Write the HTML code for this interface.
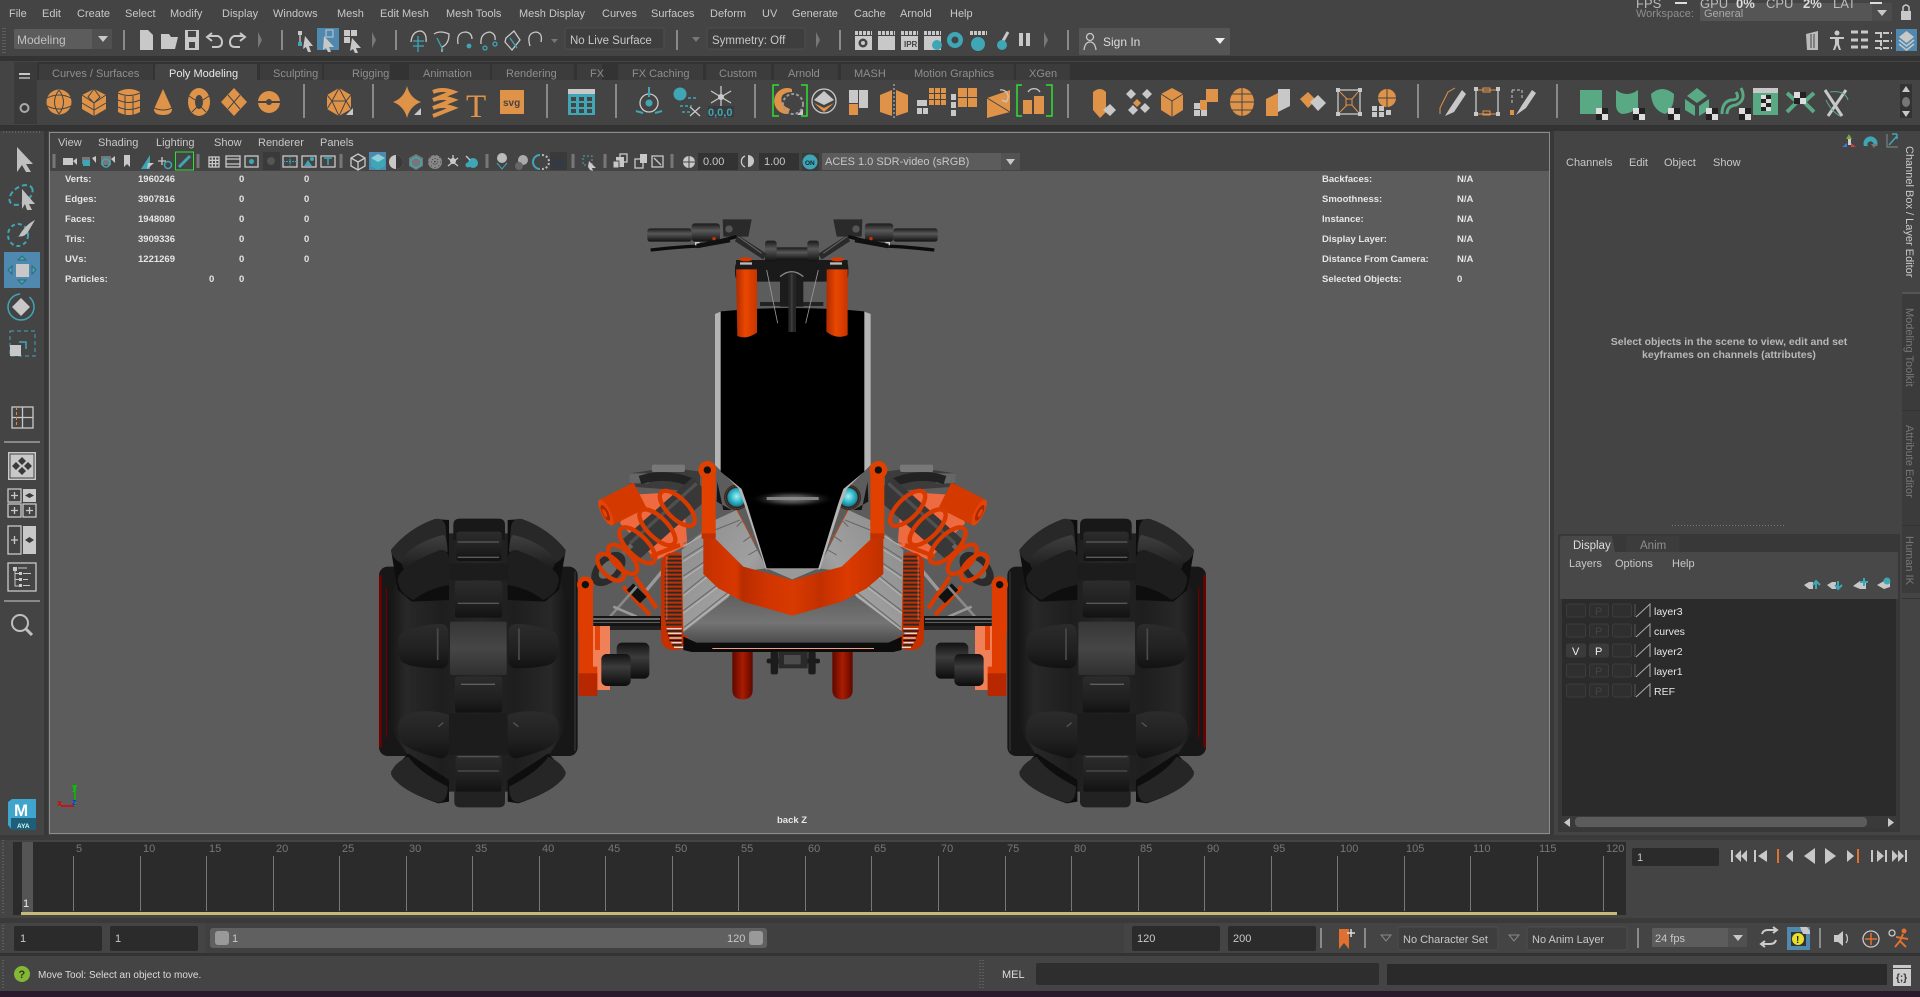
<!DOCTYPE html>
<html><head><meta charset="utf-8"><title>Maya</title>
<style>
html,body{margin:0;padding:0;background:#444;width:1920px;height:997px;overflow:hidden}
svg{display:block;position:absolute;left:0;top:0}
text{font-family:"Liberation Sans",sans-serif;font-size:11px;fill:#ccc}
.m{font-size:11px;fill:#c8c8c8}
.t{font-size:11px;fill:#8e8e8e}
.s{font-size:9.5px;font-weight:bold;fill:#e6e6e6}
.l{font-size:10.5px;fill:#e8e8e8}
.k{font-size:11px;fill:#777}
.w{fill:#c8c8c8}.o{fill:#df9348}.g{fill:#5aa985}.c{fill:#3fa6b6}
.sep{stroke:#8a8a8a;stroke-width:2;fill:none}
.ln{stroke:#444;stroke-width:1;fill:none}
.st{stroke:#c8c8c8;stroke-width:1.3;fill:none}
.cs{stroke:#3fa6b6;stroke-width:1.5;fill:none}
.fs{stroke:#c8c8c8;stroke-width:4;stroke-dasharray:3 1;fill:none}
</style></head>
<body>
<svg width="1920" height="997" viewBox="0 0 1920 997" xmlns="http://www.w3.org/2000/svg">
<defs>
<linearGradient id="fork" x1="0" x2="1" y1="0" y2="0"><stop offset="0" stop-color="#b02a00"/><stop offset=".45" stop-color="#ea4800"/><stop offset="1" stop-color="#c83400"/></linearGradient>
<linearGradient id="fork2" x1="0" x2="1" y1="0" y2="0"><stop offset="0" stop-color="#5e0800"/><stop offset=".5" stop-color="#aa1c00"/><stop offset="1" stop-color="#5e0800"/></linearGradient>
<linearGradient id="brk" x1="0" x2="1" y1="0" y2="0"><stop offset="0" stop-color="#c43000"/><stop offset=".18" stop-color="#d83800"/><stop offset=".22" stop-color="#b82c00"/><stop offset=".35" stop-color="#d03400"/><stop offset=".5" stop-color="#d83a00"/><stop offset=".65" stop-color="#c23000"/><stop offset=".8" stop-color="#dc3a00"/><stop offset="1" stop-color="#c03000"/></linearGradient>
<linearGradient id="rub" x1="0" x2="0" y1="0" y2="1"><stop offset="0" stop-color="#121212"/><stop offset=".4" stop-color="#3c3c3c"/><stop offset="1" stop-color="#0c0c0c"/></linearGradient>
<linearGradient id="bar" x1="0" x2="0" y1="0" y2="1"><stop offset="0" stop-color="#1a1a1a"/><stop offset=".4" stop-color="#585858"/><stop offset="1" stop-color="#111"/></linearGradient>
<linearGradient id="tire" x1="0" x2="1" y1="0" y2="0"><stop offset="0" stop-color="#141414"/><stop offset=".1" stop-color="#282828"/><stop offset=".3" stop-color="#1e1e1e"/><stop offset=".5" stop-color="#262626"/><stop offset=".7" stop-color="#1e1e1e"/><stop offset=".9" stop-color="#282828"/><stop offset="1" stop-color="#141414"/></linearGradient>
<linearGradient id="lug" x1="0" x2="0" y1="0" y2="1"><stop offset="0" stop-color="#2c2c2c"/><stop offset=".6" stop-color="#202020"/><stop offset="1" stop-color="#121212"/></linearGradient>
<linearGradient id="lug2" x1="0" x2="0" y1="0" y2="1"><stop offset="0" stop-color="#404040"/><stop offset="1" stop-color="#1a1a1a"/></linearGradient>
<linearGradient id="fin" x1="0" x2="1" y1="0" y2="1"><stop offset="0" stop-color="#8a8a8a"/><stop offset=".6" stop-color="#a0a0a0"/><stop offset="1" stop-color="#6e6e6e"/></linearGradient>
<linearGradient id="plate" x1="0" x2="0" y1="0" y2="1"><stop offset="0" stop-color="#5e5e5e"/><stop offset=".6" stop-color="#747474"/><stop offset="1" stop-color="#4c4c4c"/></linearGradient>
<radialGradient id="eye" cx=".5" cy=".45" r=".55"><stop offset="0" stop-color="#a8eef4"/><stop offset=".6" stop-color="#2db4c6"/><stop offset="1" stop-color="#13788a"/></radialGradient>
<radialGradient id="hl" cx=".5" cy=".5" r=".5"><stop offset="0" stop-color="#7c7c7c"/><stop offset=".5" stop-color="#3a3a3a"/><stop offset="1" stop-color="#000" stop-opacity="0"/></radialGradient>
<linearGradient id="cen" x1="0" x2="0" y1="0" y2="1"><stop offset="0" stop-color="#363636"/><stop offset=".5" stop-color="#464646"/><stop offset="1" stop-color="#303030"/></linearGradient>
<g id="wheel">
<rect x="22" y="200" width="596" height="568" rx="26" fill="#171717"/>
<rect x="610" y="226" width="8" height="516" fill="#6e0000"/>
<rect x="594" y="262" width="4" height="450" fill="#6a0000"/>
<rect x="28" y="215" width="4" height="538" fill="#333"/>
<path d="M50 300Q100 180 230 100L410 100Q540 180 590 300L590 660Q540 790 410 875L230 875Q100 790 50 660Z" fill="url(#tire)"/>
<rect x="235" y="365" width="170" height="160" rx="6" fill="url(#cen)"/>
<rect x="232" y="190" width="176" height="50" fill="#1c1c1c"/>
<rect x="232" y="640" width="176" height="125" fill="#1c1c1c"/>
<path d="M240 75Q240 56 260 56L375 56Q395 56 395 75L395 120L240 120Z" fill="#181818"/>
<rect x="250" y="95" width="136" height="88" rx="8" fill="url(#lug)"/>
<path d="M258 126H382M258 172H382" stroke="#5c5c5c" stroke-width="4"/>
<rect x="248" y="243" width="142" height="110" rx="8" fill="url(#lug)"/>
<path d="M258 310H382" stroke="#565656" stroke-width="4"/>
<rect x="248" y="530" width="142" height="108" rx="8" fill="url(#lug)"/>
<path d="M270 553H372" stroke="#606060" stroke-width="4"/>
<path d="M240 860H392V905Q392 922 375 922H258Q240 922 240 905Z" fill="#222"/>
<rect x="250" y="765" width="138" height="110" rx="6" fill="url(#lug)"/>
<path d="M258 770H382M258 813H382" stroke="#505050" stroke-width="4"/>
<g id="wl">
<path d="M58 150Q110 85 190 57L232 60L232 300L120 305L78 270Z" fill="#0e0e0e"/>
<path d="M58 815L110 760L232 840L232 905L200 910Q110 880 75 845Z" fill="#0e0e0e"/>
<path d="M58 150Q110 85 190 57Q216 52 222 80L225 118L90 190Q60 175 58 150Z" fill="#282828"/>
<path d="M85 180Q130 125 215 105Q226 110 228 155L100 215Z" fill="url(#lug2)"/>
<path d="M78 235Q90 195 205 150Q228 148 232 175L232 255Q170 265 125 300Q80 280 78 235Z" fill="#1e1e1e"/>
<path d="M78 438Q78 395 110 388Q180 370 210 372Q230 375 230 400V480Q230 505 205 505Q120 503 100 490Q78 480 78 438Z" fill="url(#lug)"/>
<path d="M198 385V480" stroke="#4a4a4a" stroke-width="5"/>
<path d="M78 685Q78 650 110 640Q180 625 232 645V750Q228 775 205 775Q140 760 105 740Q78 720 78 685Z" fill="url(#lug)"/>
<path d="M200 680L215 668" stroke="#555" stroke-width="4"/>
<path d="M58 820Q65 790 110 770Q140 815 228 860Q228 905 200 908Q110 880 75 845Q58 830 58 820Z" fill="#262626"/>
</g>
<use href="#wl" transform="translate(640,0) scale(-1,1)"/>
</g>
<g id="half">
<!-- lower fork -->
<path d="M397 690H458V810Q458 838 428 838Q397 838 397 810Z" fill="url(#fork2)"/>
<!-- pipes -->
<path d="M155 135L230 145L300 155L300 215L90 200L90 160L155 150Z" fill="#3c3c3c"/>
<rect x="88" y="160" width="60" height="30" rx="6" fill="#666"/>
<rect x="155" y="134" width="100" height="22" rx="6" fill="#787878"/>
<path d="M120 180Q200 155 280 190" stroke="#222" stroke-width="26" fill="none"/>
<path d="M90 225L250 215L262 375L170 420L60 310Z" fill="#ee6a40"/>
<!-- reservoir -->
<g transform="rotate(-27 60 255)"><rect x="12" y="213" width="115" height="86" rx="6" fill="#d43a00"/><ellipse cx="12" cy="256" rx="14" ry="43" fill="#e2440a"/><ellipse cx="10" cy="256" rx="9" ry="26" fill="#a82800"/><ellipse cx="8" cy="256" rx="5" ry="14" fill="#e2440a"/></g>
<!-- shock 1 -->
<path d="M305 200L85 395" stroke="#383838" stroke-width="78"/>
<path d="M290 190L90 370" stroke="#505050" stroke-width="10"/>
<path d="M95 375L20 450" stroke="#666" stroke-width="14"/>
<path d="M30 440L-20 490" stroke="#999" stroke-width="10"/>
<ellipse cx="25" cy="447" rx="62" ry="38" transform="rotate(-45 25 447)" fill="#2b2b2b"/>
<ellipse cx="25" cy="447" rx="36" ry="20" transform="rotate(-45 25 447)" fill="#6a6a6a"/>
<g fill="none" stroke="#d83a00" stroke-width="13">
<ellipse cx="232" cy="265" rx="68" ry="30" transform="rotate(45 232 265)"/>
<ellipse cx="172" cy="322" rx="70" ry="30" transform="rotate(45 172 322)"/>
<ellipse cx="112" cy="376" rx="70" ry="30" transform="rotate(45 112 376)"/>
<ellipse cx="68" cy="418" rx="56" ry="26" transform="rotate(45 68 418)"/>
<ellipse cx="32" cy="442" rx="50" ry="26" transform="rotate(45 32 442)"/>
<path d="M105 470L170 565M70 500L150 585M150 410L240 375"/>
</g>
<path d="M90 500L130 540" stroke="#111" stroke-width="28"/>
<path d="M30 590L110 500" stroke="#888" stroke-width="8"/>
<path d="M140 510L190 450" stroke="#999" stroke-width="10"/>
<path d="M40 560L110 590" stroke="#999" stroke-width="8"/>
<!-- A arm -->
<rect x="-20" y="588" width="205" height="30" fill="#151515"/>
<path d="M-20 597H180" stroke="#bbb" stroke-width="3"/>
<path d="M-20 607H180" stroke="#666" stroke-width="3"/>
<rect x="-20" y="618" width="210" height="12" fill="#222"/>
<!-- brake disc -->
<rect x="183" y="398" width="80" height="292" rx="34" fill="#c43000"/>
<path d="M205 410H245M200 422H245M198 434H245M196 446H245M195 458H245M194 470H245M194 482H245M194 494H245M194 506H245M194 518H245M194 530H245M194 542H245M194 554H245M194 566H245M194 578H245M194 590H245M196 602H245M198 614H245" stroke="#2a2a2a" stroke-width="6"/>
<path d="M200 410V600" stroke="#f0805a" stroke-width="5" opacity=".4"/>
<path d="M200 626H245M204 640H245M208 654H245M214 668H245M222 682H250" stroke="#ddd" stroke-width="4"/>
<path d="M200 633H245M204 647H245M208 661H245M216 675H245" stroke="#111" stroke-width="4"/>
<!-- fins -->
<path d="M245 390L345 300L410 270L500 445L420 455L400 510L290 668L250 640Z" fill="url(#fin)"/>
<g stroke="#666" stroke-width="3"><path d="M250 372L345 315M250 415L345 355M250 468L350 400M250 520L350 440M250 572L385 470M252 622L400 505M285 655L420 540M345 330L420 300M410 320L430 300M430 365L465 340M445 405L480 385"/></g>
<g stroke="#b6b6b6" stroke-width="3"><path d="M250 380L345 322M250 424L345 364M250 476L350 408M250 528L350 448M250 580L385 478M252 630L400 513"/></g>
<!-- light -->
<path d="M352 185L370 270L395 270L350 245Z" fill="#151515"/>
<circle cx="410" cy="232" r="38" fill="#2a2a2a"/>
<circle cx="410" cy="232" r="34" fill="none" stroke="#d83a00" stroke-width="2" stroke-dasharray="3 4"/>
<circle cx="410" cy="232" r="28" fill="url(#eye)"/>
<path d="M410 270L465 370" stroke="#e04000" stroke-width="2"/>
<!-- left post assembly -->
<rect x="-22" y="618" width="52" height="192" fill="#f08058"/>
<rect x="50" y="668" width="98" height="108" rx="16" fill="url(#rub)"/>
<rect x="4" y="702" width="88" height="96" rx="16" fill="url(#rub)"/>
<path d="M-66 490H-21V740H-8V810H-64V660L-66 620Z" fill="#de3c00"/>
<rect x="-64" y="760" width="56" height="68" fill="#b82800"/>
<circle cx="-44" cy="494" r="25" fill="#de3c00"/>
<circle cx="-44" cy="494" r="11" fill="#111"/>
<path d="M-15 618H0V690H-15Z" fill="#e2440a"/>
</g>
</defs>

<!-- base -->
<rect width="1920" height="997" fill="#444"/>
<rect x="0" y="56" width="1920" height="5" fill="#333"/>
<rect x="0" y="125" width="1920" height="6" fill="#333"/>
<rect x="44" y="131" width="4" height="705" fill="#383838"/>
<rect x="0" y="835" width="1920" height="5" fill="#3a3a3a"/>
<rect x="0" y="918" width="1920" height="5" fill="#3a3a3a"/>
<rect x="0" y="953" width="1920" height="3" fill="#333"/>
<rect x="0" y="991" width="1920" height="6" fill="#2a1a2c"/>

<!-- menu -->
<text class="m" y="17">
<tspan x="9">File</tspan><tspan x="42">Edit</tspan><tspan x="77">Create</tspan><tspan x="125">Select</tspan><tspan x="170">Modify</tspan><tspan x="222">Display</tspan><tspan x="273">Windows</tspan><tspan x="337">Mesh</tspan><tspan x="380">Edit Mesh</tspan><tspan x="446">Mesh Tools</tspan><tspan x="519">Mesh Display</tspan><tspan x="602">Curves</tspan><tspan x="651">Surfaces</tspan><tspan x="710">Deform</tspan><tspan x="762">UV</tspan><tspan x="792">Generate</tspan><tspan x="854">Cache</tspan><tspan x="900">Arnold</tspan><tspan x="950">Help</tspan>
</text>
<rect x="1700" y="3" width="192" height="18" fill="#555"/>
<rect x="1872" y="3" width="20" height="18" fill="#4c4c4c"/>
<path d="M1877 10H1887L1882 16Z" class="w"/>
<text x="1636" y="8" style="font-size:13px;fill:#bbb">FPS</text>
<rect x="1675" y="2" width="12" height="2" fill="#ddd"/>
<g><text x="1700" y="8" style="font-size:13px;fill:#bbb">GPU</text><text x="1736" y="8" style="font-size:13px;font-weight:bold;fill:#ddd">0%</text><text x="1766" y="8" style="font-size:13px;fill:#bbb">CPU</text><text x="1803" y="8" style="font-size:13px;font-weight:bold;fill:#ddd">2%</text><text x="1833" y="8" style="font-size:13px;fill:#bbb">LAT</text></g>
<rect x="1870" y="2" width="12" height="2" fill="#ddd"/>
<text class="t" x="1636" y="17">Workspace:</text><text class="t" x="1704" y="17" style="fill:#aaa">General</text>
<rect x="1901" y="11" width="10" height="9" class="w"/><path d="M1903 11V7Q1906 3 1909 7V11" stroke="#c8c8c8" stroke-width="1.5" fill="none"/>

<!-- status line -->
<path d="M3 28V54M5 28V54" stroke="#777" stroke-dasharray="1 2"/>
<rect x="14" y="29" width="98" height="20" rx="2" fill="#5c5c5c"/>
<rect x="92" y="29" width="20" height="20" fill="#505050"/>
<path d="M98 36H108L103 42Z" class="w"/>
<text class="t" x="17" y="44" style="font-size:12px;fill:#c0c0c0">Modeling</text>
<path class="sep" d="M124 30V50M282 30V50M396 30V50M677 30V50M840 30V50M1068 30V50"/>
<path d="M140 30H148L153 35V50H140Z" class="w"/>
<path d="M161 34H169L171 37H178L175 49H161Z" class="w"/>
<path d="M185 30H199V50H185Z" class="w"/><rect x="188" y="31" width="8" height="6" fill="#444"/><rect x="189" y="42" width="6" height="6" fill="#444"/>
<path d="M208 36H218Q222 38 222 42Q222 47 217 47H212M212 33L207 37L212 41" stroke="#c8c8c8" stroke-width="2" fill="none"/>
<path d="M244 36H234Q230 38 230 42Q230 47 235 47H240M240 33L245 37L240 41" stroke="#c8c8c8" stroke-width="2" fill="none"/>
<path d="M258 32L262 40L258 48Z" fill="#777"/>
<path d="M372 32L376 40L372 48Z" fill="#777"/><path d="M816 32L820 40L816 48Z" fill="#777"/><path d="M1044 32L1048 40L1044 48Z" fill="#777"/>
<g><rect x="298" y="31" width="4" height="4" class="w"/><rect x="298" y="42" width="4" height="4" class="c"/><path d="M300 35V42" class="st"/><path d="M305 36L313 46L309 46L311 52L308 52L306 47L303 49Z" class="w"/></g>
<rect x="317" y="28" width="22" height="22" fill="#5089b0"/><rect x="326" y="30" width="7" height="7" style="fill:none;stroke:#c8c8c8"/><path d="M324 36L334 47L329 47L331 52L328 52L326 48L323 50Z" class="w"/>
<rect x="344" y="30" width="6" height="6" class="w"/><rect x="351" y="30" width="6" height="6" class="w"/><rect x="344" y="37" width="6" height="6" class="w"/><path d="M352 38L361 48L356 48L358 53L355 53L353 49L350 51Z" class="w"/>
<g class="st"><path d="M411 42Q412 31 421 31Q427 33 426 42" style="stroke:#c8c8c8"/><path d="M418 36V52M413 41H424M413 46H424" style="stroke:#3fa6b6"/>
<path d="M434 34Q440 30 449 34Q449 44 442 47L442 52" /><path d="M437 38L443 50" style="stroke:#3fa6b6"/>
<path d="M458 44Q456 32 466 32Q472 33 472 39"/><circle cx="469" cy="46" r="2.4" fill="#3fa6b6" stroke="none"/>
<path d="M481 44Q480 33 490 32Q496 34 495 40"/><circle cx="485" cy="48" r="2" fill="none" style="stroke:#3fa6b6"/><circle cx="495" cy="44" r="2" fill="none" style="stroke:#3fa6b6"/>
<path d="M506 38L514 31L520 40L512 50L505 42Z"/><path d="M510 38L517 48" style="stroke:#3fa6b6"/>
<path d="M530 46Q526 33 536 32Q543 33 541 42"/></g>
<path d="M551 39H558L554.500 43Z" fill="#777"/>
<rect x="565" y="28" width="99" height="21" rx="2" fill="#3e3e3e" stroke="#4e4e4e"/><text x="570" y="44" class="m" style="font-size:11.500px">No Live Surface</text>
<path d="M692 37H700L696 42Z" fill="#777"/>
<rect x="707" y="28" width="98" height="21" rx="2" fill="#3e3e3e" stroke="#4e4e4e"/><text x="712" y="44" class="m" style="font-size:11.500px">Symmetry: Off</text>
<path class="fs" d="M855 33H872M878 33H895M901 33H918M924 33H941M970 33H987"/>
<rect x="855" y="36" width="17" height="14" class="w"/><circle cx="863" cy="43" r="4.500" fill="#444"/><circle cx="863" cy="43" r="2" class="w"/>
<rect x="878" y="36" width="17" height="14" class="w"/>
<rect x="901" y="36" width="17" height="14" class="w"/><text x="904" y="47" style="font-size:8px;font-weight:bold;fill:#444">IPR</text>
<rect x="924" y="36" width="17" height="14" class="w"/><circle cx="937" cy="45" r="5" class="c"/>
<circle cx="955" cy="40" r="8" class="c"/><circle cx="955" cy="40" r="3.500" fill="#444"/>
<circle cx="978" cy="44" r="7" class="c"/>
<path d="M999 48L1008 32" stroke="#c8c8c8" stroke-width="3"/><circle cx="1002" cy="45" r="5" class="c"/>
<rect x="1019" y="33" width="4" height="13" class="w"/><rect x="1026" y="33" width="4" height="13" class="w"/>
<rect x="1079" y="28" width="151" height="27" rx="1" fill="#555"/>
<circle cx="1090" cy="37" r="3.500" class="st"/><path d="M1084 50Q1085 42 1090 42Q1095 42 1096 50" class="st"/>
<text x="1103" y="46" style="font-size:12px;fill:#ddd">Sign In</text>
<path d="M1215 38H1225L1220 44Z" fill="#eee"/>
<g><path d="M1806 34L1818 31V50H1807Z" fill="#bbb"/><path d="M1811 34V48M1814 34V48" stroke="#444"/></g>
<circle cx="1837" cy="33" r="2.500" class="w"/><path d="M1830 37H1844V39H1839V44L1841 50H1839L1837 45L1835 50H1833L1835 44V39H1830Z" class="w"/>
<path d="M1851 32H1869M1851 40H1869M1851 47H1869" stroke="#c8c8c8" stroke-width="3" stroke-dasharray="7 3"/>
<path d="M1875 33H1892M1875 41H1892M1875 48H1892M1881 32V50" stroke="#c8c8c8" stroke-width="2" stroke-dasharray="6 2"/>
<rect x="1896" y="29" width="21" height="22" fill="#5089b0"/><path d="M1906.500 31L1914 37L1906.500 43L1899 37Z" class="w"/><path d="M1899 40L1906.500 46L1914 40M1899 44L1906.500 50L1914 44" stroke="#c8c8c8" stroke-width="1.500" fill="none"/>

<!-- shelf -->
<rect x="14" y="62" width="23" height="62" fill="#3a3a3a"/>
<rect x="37" y="62" width="1883" height="18" fill="#333"/>
<rect x="19" y="73" width="11" height="2" class="w"/><rect x="19" y="77" width="11" height="2" fill="#999"/>
<circle cx="24.500" cy="108" r="4" stroke="#aaa" stroke-width="2" fill="none"/>
<g fill="#3c3c3c">
<path d="M39 80V66Q39 64 41 64H153V80Z"/><path d="M260 80V64H322V80Z"/><path d="M324 80V64H390V80Z"/><path d="M409 80V64H490V80Z"/><path d="M492 80V64H574V80Z"/><path d="M577 80V64H602V80Z"/><path d="M618 80V64H703V80Z"/><path d="M706 80V64H771V80Z"/><path d="M774 80V64H838V80Z"/><path d="M841 80V64H900V80Z"/><path d="M900 80V64H1014V80Z"/><path d="M1016 80V64H1070V80Z"/>
</g>
<path d="M155 80V66Q155 64 157 64H257V80Z" fill="#444"/>
<g class="t"><text x="52" y="77" class="t">Curves / Surfaces</text><text x="169" y="77" style="fill:#e8e8e8">Poly Modeling</text><text x="273" y="77" class="t">Sculpting</text><text x="352" y="77" class="t">Rigging</text><text x="423" y="77" class="t">Animation</text><text x="506" y="77" class="t">Rendering</text><text x="590" y="77" class="t">FX</text><text x="632" y="77" class="t">FX Caching</text><text x="719" y="77" class="t">Custom</text><text x="788" y="77" class="t">Arnold</text><text x="854" y="77" class="t">MASH</text><text x="914" y="77" class="t">Motion Graphics</text><text x="1029" y="77" class="t">XGen</text></g>
<path class="sep" d="M304 84V118M373 84V118M547 84V118M616 84V118M755 84V118M1068 84V118M1418 84V118M1557 84V118"/>
<!-- poly primitives -->
<circle cx="59" cy="102" r="12.500" class="o"/><path class="ln" d="M47 98Q59 92 71 98M47 106Q59 112 71 106M59 90Q50 102 59 114M59 90Q68 102 59 114"/>
<path class="o" d="M94 89L106 95V109L94 116L82 109V95Z"/><path class="ln" d="M94 89L88 97L94 103L100 97ZM94 103V116M82 95L94 103M106 95L94 103M82 103L94 110L106 103"/>
<path class="o" d="M118 92Q129 86 140 92V112Q129 118 118 112Z"/><path class="ln" d="M118 93Q129 98 140 93M118 100Q129 105 140 100M118 107Q129 112 140 107M125 96V115M133 96V115"/>
<path class="o" d="M163 89L172 109Q172 115 163 115Q154 115 154 109Z"/><path class="ln" d="M154 108Q163 112 172 108"/>
<ellipse cx="199" cy="102" rx="11" ry="14" class="o"/><ellipse cx="199" cy="102" rx="4" ry="7" fill="#444"/><path class="ln" d="M189 96L195 100M209 96L203 100M192 112L197 107M206 112L201 107"/>
<path class="o" d="M234 88L247 102L234 116L221 102Z"/><path class="ln" d="M228 95L240 109M240 95L228 109"/>
<circle cx="269" cy="102" r="11" class="o"/><path d="M258 102H280" stroke="#444" stroke-width="2"/><circle cx="269" cy="102" r="3" fill="#444"/>
<path class="o" d="M339 88L351 95V109L339 116L327 109V95Z"/><path class="ln" d="M339 88L332 101L346 101ZM327 95L332 101L339 116L346 101L351 95M332 101L327 109M346 101L351 109"/><path d="M353 115V108L346 115Z" class="w"/>
<path class="o" d="M407 86Q410 98 421 102Q410 106 407 118Q404 106 393 102Q404 98 407 86Z"/><path d="M421 115V108L414 115Z" class="w"/>
<path d="M433 92Q442 88 453 92L433 100Q442 96 453 100L433 108Q442 104 453 108L433 116" stroke="#df9348" stroke-width="4" fill="none"/>
<text x="466" y="117" style="font-family:'Liberation Serif',serif;font-size:33px;fill:#df9348">T</text>
<rect x="500" y="90" width="24" height="24" class="o"/><text x="503" y="106" style="font-size:10px;font-weight:bold;fill:#444">svg</text>
<!-- calc -->
<rect x="568" y="89" width="27" height="5" class="w"/><rect x="568" y="94" width="27" height="21" class="c"/>
<g fill="#444"><rect x="571" y="97" width="5" height="4"/><rect x="579" y="97" width="5" height="4"/><rect x="587" y="97" width="5" height="4"/><rect x="571" y="103" width="5" height="4"/><rect x="579" y="103" width="5" height="4"/><rect x="587" y="103" width="5" height="4"/><rect x="571" y="109" width="5" height="4"/><rect x="579" y="109" width="5" height="4"/><rect x="587" y="109" width="5" height="4"/></g>
<!-- constraints -->
<circle cx="649" cy="103" r="9" class="st"/><path d="M649 87V97M643 113L636 111M655 113L662 111" stroke="#3fa6b6" stroke-width="2"/><circle cx="649" cy="103" r="3.500" class="c"/>
<circle cx="680" cy="94" r="6.500" class="c"/><path d="M688 98H698M680 106H692M682 112H692" class="cs" stroke-dasharray="3 2"/><path d="M690 107L700 116M700 107L690 116" class="st"/>
<path d="M721 86V106M711 91L731 103M731 91L711 103" class="st" stroke-width="2"/><circle cx="721" cy="97" r="3" class="w"/>
<rect x="708" y="106" width="26" height="11" fill="#3a3a3a"/><text x="708" y="116" style="font-size:11px;fill:#3fa6b6;font-weight:bold">0,0,0</text>
<!-- deform row -->
<path d="M779 85H773V116H779M801 85H807V116H801" stroke="#2ee02e" stroke-width="1.500" fill="none"/>
<path d="M792 89A13 13 0 1 0 788 114L790 109Q779 105 782 96Q785 92 792 92Z" class="o"/><circle cx="793" cy="104" r="10" fill="none" stroke="#999" stroke-width="2" stroke-dasharray="3 2"/><path d="M803 115V109L797 115Z" class="w"/>
<circle cx="824" cy="101" r="12" class="st"/><path class="w" d="M824 91L834 100L824 105L814 100Z"/><path class="o" d="M814 103L824 108L834 103L824 112Z"/>
<rect x="849" y="90" width="9" height="13" class="w"/><rect x="859" y="90" width="9" height="18" class="w"/><rect x="849" y="104" width="9" height="11" class="o"/>
<path class="o" d="M880 95L892 90V116L880 112Z"/><path class="o" d="M896 90L908 95V112L896 116Z"/><path d="M894 84V118" stroke="#c8c8c8" stroke-dasharray="2 2"/>
<g class="o"><rect x="929" y="88" width="5" height="5"/><rect x="935" y="88" width="5" height="5"/><rect x="941" y="88" width="5" height="5"/><rect x="929" y="94" width="5" height="5"/><rect x="935" y="94" width="5" height="5"/><rect x="941" y="94" width="5" height="5"/><rect x="929" y="100" width="5" height="5"/><rect x="935" y="100" width="5" height="5"/><rect x="941" y="100" width="5" height="5"/></g><g class="w"><rect x="917" y="100" width="10" height="6"/><rect x="917" y="108" width="5" height="6"/><rect x="923" y="108" width="5" height="6"/></g>
<g class="w"><rect x="951" y="94" width="5" height="6"/><rect x="951" y="102" width="5" height="6"/><rect x="951" y="110" width="5" height="6"/></g><g class="o"><rect x="958" y="88" width="9" height="9"/><rect x="968" y="88" width="9" height="9"/><rect x="958" y="98" width="9" height="9"/><rect x="968" y="98" width="9" height="9"/></g>
<path class="o" d="M987 98L1010 90V112L987 118Z"/><path class="ln" d="M987 98L1010 112"/><path d="M1000 90A7 7 0 0 1 1006 102M1006 102L1002 100" class="st"/>
<path d="M1022 85H1017V116H1022M1046 85H1052V116H1046" stroke="#2ee02e" stroke-width="1.500" fill="none"/><path class="o" d="M1023 100H1032V114H1023ZM1034 96H1044V114H1034Z"/><path d="M1028 92A7 7 0 0 1 1040 92" class="st"/>
<!-- edit mesh icons -->
<path class="o" d="M1093 92Q1100 86 1106 92V112L1100 118L1093 110Z"/><path class="w" d="M1103 110L1110 104L1116 110L1110 116Z"/>
<g class="w"><path d="M1126 94L1131 89L1136 94L1131 99Z"/><path d="M1140 108L1145 103L1150 108L1145 113Z"/><path d="M1128 110L1133 105L1138 110L1133 115Z"/><path d="M1142 94L1147 89L1152 94L1147 99Z"/></g><g class="o"><path d="M1133 103L1137 99L1141 103L1137 107Z"/></g>
<path class="o" d="M1172 88L1183 94V110L1172 117L1161 110V94Z"/><path class="ln" d="M1172 101L1161 94M1172 101L1183 94M1172 101V117"/>
<path class="o" d="M1206 89H1218V102H1206Z"/><path class="o" d="M1200 100H1207V110H1200Z"/><g class="w"><rect x="1194" y="103" width="6" height="6"/><rect x="1194" y="110" width="6" height="6"/><rect x="1201" y="110" width="6" height="6"/></g>
<ellipse cx="1242" cy="102" rx="12" ry="14" class="o"/><path class="ln" d="M1230 102H1254M1242 88V116M1232 94H1252M1232 110H1252"/>
<path class="o" d="M1266 99L1278 93V116H1266Z"/><path class="w" d="M1278 89L1290 89V106L1278 112Z"/>
<path class="o" d="M1300 99L1308 92L1316 100L1308 108Z"/><path class="w" d="M1310 102L1318 95L1326 103L1318 111Z"/>
<rect x="1338" y="90" width="22" height="24" class="st"/><g class="w"><rect x="1336" y="88" width="4" height="4"/><rect x="1358" y="88" width="4" height="4"/><rect x="1336" y="112" width="4" height="4"/><rect x="1358" y="112" width="4" height="4"/></g><rect x="1346" y="99" width="6" height="6" stroke="#df9348" fill="none"/><path d="M1340 92L1347 99M1358 92L1352 99M1340 112L1347 105M1358 112L1352 105" stroke="#df9348"/>
<circle cx="1387" cy="98" r="9" class="o"/><path class="ln" d="M1378 98H1396M1387 89V107"/><g class="w"><rect x="1372" y="106" width="5" height="5"/><rect x="1379" y="106" width="5" height="5"/><rect x="1372" y="112" width="5" height="5"/><rect x="1379" y="112" width="5" height="5"/><rect x="1386" y="110" width="5" height="5"/></g>
<!-- curves tools -->
<path d="M1440 114V108L1448 92L1455 88" stroke="#df9348" fill="none"/><path d="M1445 116L1450 108L1462 90L1466 94L1454 112Z" class="w"/>
<path d="M1476 90V114M1498 90V114" class="st"/><path d="M1478 90H1496M1478 114H1496" stroke="#df9348"/><g class="w"><rect x="1474" y="87" width="4" height="4"/><rect x="1496" y="87" width="4" height="4"/><rect x="1474" y="112" width="4" height="4"/><rect x="1496" y="112" width="4" height="4"/></g><rect x="1483" y="88" width="7" height="4" fill="none" stroke="#df9348"/><rect x="1483" y="111" width="7" height="4" fill="none" stroke="#df9348"/>
<path d="M1512 90H1522M1512 90V104M1522 90V100" stroke="#c8c8c8" stroke-dasharray="3 2"/><path d="M1516 115L1522 105L1532 90L1536 93L1526 108Z" class="w"/><rect x="1510" y="110" width="4" height="5" class="o"/>
<!-- green -->
<rect x="1580" y="90" width="22" height="24" class="g"/><g id="ck"><rect x="1596" y="108" width="6" height="6" fill="#ddd"/><rect x="1602" y="114" width="6" height="6" fill="#ddd"/><rect x="1602" y="108" width="6" height="6" fill="#222"/><rect x="1596" y="114" width="6" height="6" fill="#222"/></g>
<path class="g" d="M1616 90Q1627 98 1638 90V108Q1630 114 1622 114Q1616 112 1616 105Z"/><use href="#ck" transform="translate(37,0)"/>
<path class="g" d="M1651 94Q1662 84 1674 94Q1674 110 1665 114Q1652 110 1651 94Z"/><use href="#ck" transform="translate(72,0)"/>
<path class="g" d="M1697 88L1707 96L1697 103L1687 96Z"/><path class="g" d="M1685 99L1695 106V116L1685 110ZM1709 99L1699 106V116L1709 110Z"/><use href="#ck" transform="translate(110,0)"/>
<path d="M1722 114Q1722 102 1731 100Q1741 100 1736 92M1727 114Q1727 106 1736 105Q1747 100 1741 88" stroke="#5aa985" stroke-width="3" fill="none"/><use href="#ck" transform="translate(143,0)"/>
<rect x="1753" y="88" width="25" height="27" class="g"/><rect x="1753" y="88" width="25" height="5" class="w"/><g fill="#ddd"><rect x="1761" y="95" width="5" height="4"/><rect x="1766" y="99" width="5" height="4"/><rect x="1761" y="103" width="5" height="4"/><rect x="1766" y="107" width="5" height="4"/></g><g fill="#222"><rect x="1766" y="95" width="5" height="4"/><rect x="1761" y="99" width="5" height="4"/><rect x="1766" y="103" width="5" height="4"/><rect x="1761" y="107" width="5" height="4"/></g>
<path d="M1787 93L1797 102L1787 112M1814 93L1804 102L1814 112" stroke="#5aa985" stroke-width="4" fill="none"/><use href="#ck" transform="translate(198,-16)"/>
<path d="M1825 90L1842 116M1846 90L1828 116" stroke="#c8c8c8" stroke-width="3"/><path d="M1830 92Q1845 90 1848 100M1826 100Q1832 112 1840 116" stroke="#5aa985" fill="none"/>
<rect x="1900" y="84" width="12" height="34" fill="#333"/><path d="M1902 92L1906 86L1910 92Z" class="w"/><ellipse cx="1906" cy="102" rx="4" ry="5" fill="#777"/><path d="M1902 111L1906 117L1910 111Z" class="w"/>

<!-- left toolbox -->
<path d="M3 132H40" stroke="#777" stroke-dasharray="1 2"/>
<path d="M17 147L33 164L26 164L31 172L26 172L22 165L17 172Z" fill="#c0c0c0"/>
<ellipse cx="21" cy="195" rx="13" ry="8" transform="rotate(-35 21 195)" fill="none" stroke="#3fa6b6" stroke-width="2" stroke-dasharray="5 3"/><path d="M22 189L35 204L29 204L32 210L27 210L25 204L22 209Z" fill="#c0c0c0"/>
<ellipse cx="18" cy="235" rx="10" ry="11" fill="none" stroke="#3fa6b6" stroke-width="2" stroke-dasharray="4 3"/><path d="M19 236Q25 225 35 220L28 232Q24 238 17 236Z" fill="#c0c0c0"/>
<rect x="4" y="252" width="36" height="36" fill="#5089b0"/><rect x="16" y="264" width="13" height="13" class="w"/><path d="M22 256L26 260H18ZM22 284L26 280H18ZM8 270L12 266V274ZM36 270L32 266V274Z" fill="#4aa8b8" stroke="#2c6a78"/>
<circle cx="21" cy="307" r="13" class="cs" stroke-width="1.500" stroke-dasharray="60 10"/><path d="M21 298L30 307L21 316L12 307Z" class="w"/>
<rect x="10" y="331" width="25" height="25" fill="none" stroke="#3fa6b6" stroke-dasharray="4 3"/><rect x="10" y="345" width="11" height="11" class="w"/><path d="M19 342H26V349" class="cs"/>
<rect x="12" y="407" width="21" height="21" class="st" stroke-width="1.500"/><path d="M22.500 407V428M12 417.500H33" class="st"/><path d="M16.500 407V428" stroke="#e08a3a" stroke-dasharray="3 2"/>
<rect x="4" y="441" width="36" height="2" fill="#888"/>
<rect x="8" y="452" width="28" height="28" class="w"/><rect x="10" y="454" width="24" height="24" fill="none" stroke="#444"/><g fill="#3a3a3a"><path d="M22 457L26 461L22 465L18 461Z"/><path d="M22 467L26 471L22 475L18 471Z"/><path d="M16 462L20 466L16 470L12 466Z"/><path d="M28 462L32 466L28 470L24 466Z"/></g>
<rect x="8" y="489" width="13" height="13" class="st"/><rect x="23" y="489" width="13" height="13" class="w"/><rect x="8" y="504" width="13" height="13" class="st"/><rect x="23" y="504" width="13" height="13" class="st"/>
<path d="M11 495.500H18M14.500 492V499M11 510.500H18M14.500 507V514M26 510.500H33M29.500 507V514" class="st"/><path d="M29.500 493L34 495.500L29.500 498L25 495.500Z" fill="#3a3a3a"/>
<rect x="8" y="526" width="13" height="28" class="st"/><rect x="23" y="526" width="13" height="28" class="w"/><path d="M11 540H18M14.500 536V544" class="st"/><path d="M29.500 537L34 540L29.500 543L25 540Z" fill="#3a3a3a"/>
<rect x="8" y="563" width="28" height="28" class="st"/><rect x="13" y="567" width="4" height="4" class="w"/><rect x="19" y="572" width="3" height="3" class="w"/><rect x="19" y="578" width="3" height="3" class="w"/><rect x="19" y="584" width="3" height="3" class="w"/><path d="M18 568H27M15 571V586H19M15 573.500H19M15 579.500H19M23 573.500H31M23 579.500H28M23 585.500H30" stroke="#c8c8c8" fill="none"/>
<rect x="4" y="600" width="36" height="2" fill="#888"/>
<circle cx="20" cy="623" r="8" fill="none" stroke="#c0c0c0" stroke-width="2"/><path d="M26 629L32 635" stroke="#c0c0c0" stroke-width="3"/>
<path d="M8 802L12 799H36V817L36 830H12L8 825Z" fill="#3fa5cc"/><rect x="11" y="818" width="25" height="12" fill="#1e5e78"/><text x="14" y="816" style="font-size:17px;font-weight:bold;fill:#fff">M</text><text x="17" y="828" style="font-size:6.500px;font-weight:bold;fill:#cfe">AYA</text>

<!-- viewport -->
<rect x="49" y="132" width="1501" height="702" fill="#8c8c8c"/>
<rect x="50" y="133" width="1499" height="38" fill="#444"/>
<rect x="50" y="171" width="1499" height="662" fill="#5c5c5c"/>
<text class="m" y="146"><tspan x="58">View</tspan><tspan x="98">Shading</tspan><tspan x="156">Lighting</tspan><tspan x="214">Show</tspan><tspan x="258">Renderer</tspan><tspan x="320">Panels</tspan></text>
<path class="sep" style="stroke:#777;stroke-width:3" d="M54 154V168M198 154V168M341 154V168M487 154V168M573 154V168M605 154V168M672 154V168"/>
<g transform="translate(0,1)">
<rect x="63" y="157" width="10" height="7" class="w"/><path d="M73 160L77 157V164Z" class="w"/>
<path d="M82 156H90V163H82Z" fill="#777"/><rect x="83" y="159" width="7" height="6" class="c"/><path d="M92 157L96 155V162Z" class="w"/>
<rect x="101" y="155" width="10" height="9" fill="#777"/><circle cx="106" cy="162" r="4" fill="none" stroke="#3fa6b6" stroke-width="1.500"/><path d="M111 158L115 155V162Z" class="w"/>
<path d="M124 154H130V166L127 163L124 166Z" class="w"/>
<path d="M141 168L150 154V168Z" class="c"/><path d="M147 168L154 162H148Z" class="w"/>
<path d="M158 160H166M162 156V164" class="st"/><circle cx="168" cy="164" r="3.500" class="cs"/>
<rect x="175.500" y="151" width="18" height="18" fill="none" stroke="#2ee02e"/><path d="M179 166L190 155" stroke="#3fa6b6" stroke-width="3"/>
<rect x="209" y="156" width="10" height="10" class="st" stroke-width="1"/><path d="M212.300 156V166M215.600 156V166M209 159.300H219M209 162.600H219" class="st" stroke-width=".8"/>
<rect x="226" y="155" width="14" height="11" class="st"/><path d="M226 158H240M226 163H240" class="st"/>
<rect x="245" y="155" width="13" height="11" class="st"/><circle cx="251.500" cy="160.500" r="2.500" class="c"/>
<rect x="263" y="151" width="17" height="18" fill="#3a3a3a"/><circle cx="271" cy="160" r="4" fill="#555"/>
<rect x="283" y="155" width="14" height="11" class="st"/><path d="M283 160.500H297M290 155V166" stroke="#3fa6b6" stroke-dasharray="2 1"/>
<rect x="302" y="155" width="14" height="11" class="st"/><path d="M304 165L308 159L312 165Z" class="c"/><circle cx="312" cy="158" r="2" class="c"/>
<rect x="321" y="155" width="14" height="11" class="st"/><path d="M324 157H332M328 157V164" stroke="#3fa6b6" stroke-width="1.500"/>
<path d="M358 153L365 157V165L358 169L351 165V157Z" class="st" stroke-width="1"/><path d="M358 161L351 157M358 161L365 157M358 161V169" class="st" stroke-width=".8"/>
<rect x="369" y="151" width="17" height="18" fill="#5089b0"/><path d="M378 153L385 157V165L378 169L371 165V157Z" class="c"/><path d="M371 157L378 161L385 157L378 153Z" fill="#8ed0da"/>
<circle cx="396" cy="161" r="7" class="w"/><path d="M396 154A7 7 0 0 1 396 168Z" fill="#3a3a3a"/>
<path d="M416 153L423 157V165L416 169L409 165V157Z" fill="#777"/><path d="M416 156L421 159V164L416 167L411 164V159Z" class="cs"/>
<circle cx="435" cy="161" r="7" fill="#888"/><path d="M430 156L440 166M440 156L430 166M435 154V168M428 161H442" stroke="#444" stroke-dasharray="1 2"/>
<path d="M453 154V163M448 157L458 165M458 157L448 165" class="st"/><circle cx="453" cy="160" r="3" class="w"/>
<circle cx="473" cy="162" r="5" class="c"/><circle cx="468" cy="164" r="2.500" class="c"/><path d="M466 155L470 159" class="st"/>
<circle cx="502" cy="157" r="5" fill="#bbb"/><path d="M497 162L502 168L507 162" stroke="#3fa6b6" fill="none"/>
<circle cx="523" cy="159" r="5" fill="#aaa"/><circle cx="519" cy="165" r="4" fill="#666"/>
<path d="M540 154A7 7 0 0 0 540 168" stroke="#3fa6b6" stroke-width="2" fill="none"/><path d="M542 154A7 7 0 0 1 542 168" stroke="#bbb" stroke-width="2" fill="none" stroke-dasharray="2 2"/>
<rect x="550" y="151" width="17" height="18" fill="#3a3a3a"/><rect x="553" y="157" width="11" height="10" fill="#333a44"/>
<rect x="583" y="155" width="9" height="9" fill="none" stroke="#3fa6b6" stroke-dasharray="2 2"/><path d="M589 160L596 167L592 167L593 170L590 169L588 166Z" class="w"/>
<rect x="616" y="156" width="8" height="10" class="w"/><rect x="613" y="160" width="6" height="7" class="w" stroke="#444"/><rect x="620" y="153" width="7" height="8" class="st"/>
<rect x="640" y="153" width="7" height="9" class="w"/><rect x="635" y="158" width="8" height="9" class="st"/>
<rect x="652" y="155" width="11" height="11" class="st"/><path d="M654 157L661 164" class="st"/>
<circle cx="689" cy="161" r="6" class="w"/><path d="M689 155V167M683 161H695" stroke="#444"/>
<path d="M748 154A6 6 0 0 1 748 166Z" class="w"/><path d="M745 155A6 6 0 0 0 745 166" class="st"/>
</g>
<rect x="698" y="153" width="40" height="17" fill="#333"/><text x="703" y="165" class="m">0.00</text>
<rect x="759" y="153" width="40" height="17" fill="#333"/><text x="764" y="165" class="m">1.00</text>
<rect x="802" y="153" width="17" height="18" fill="#3a3a3a"/><circle cx="810" cy="162" r="7.500" class="c"/><text x="805" y="165" style="font-size:6.500px;font-weight:bold;fill:#123">ON</text>
<rect x="822" y="153" width="198" height="17" fill="#5c5c5c"/><rect x="1001" y="153" width="19" height="17" fill="#525252"/><path d="M1006 159H1015L1010.500 165Z" class="w"/>
<text x="825" y="165" class="m">ACES 1.0 SDR-video (sRGB)</text>

<!-- stats -->
<g class="s">
<text class="s" x="65" y="182">Verts:</text><text class="s" x="138" y="182">1960246</text><text class="s" x="239" y="182">0</text><text class="s" x="304" y="182">0</text>
<text class="s" x="65" y="202">Edges:</text><text class="s" x="138" y="202">3907816</text><text class="s" x="239" y="202">0</text><text class="s" x="304" y="202">0</text>
<text class="s" x="65" y="222">Faces:</text><text class="s" x="138" y="222">1948080</text><text class="s" x="239" y="222">0</text><text class="s" x="304" y="222">0</text>
<text class="s" x="65" y="242">Tris:</text><text class="s" x="138" y="242">3909336</text><text class="s" x="239" y="242">0</text><text class="s" x="304" y="242">0</text>
<text class="s" x="65" y="262">UVs:</text><text class="s" x="138" y="262">1221269</text><text class="s" x="239" y="262">0</text><text class="s" x="304" y="262">0</text>
<text class="s" x="65" y="282">Particles:</text><text class="s" x="209" y="282">0</text><text class="s" x="239" y="282">0</text>
<text class="s" x="1322" y="182">Backfaces:</text><text class="s" x="1457" y="182">N/A</text>
<text class="s" x="1322" y="202">Smoothness:</text><text class="s" x="1457" y="202">N/A</text>
<text class="s" x="1322" y="222">Instance:</text><text class="s" x="1457" y="222">N/A</text>
<text class="s" x="1322" y="242">Display Layer:</text><text class="s" x="1457" y="242">N/A</text>
<text class="s" x="1322" y="262">Distance From Camera:</text><text class="s" x="1457" y="262">N/A</text>
<text class="s" x="1322" y="282">Selected Objects:</text><text class="s" x="1457" y="282">0</text>
<text class="s" x="777" y="823">back Z</text>
</g>

<!-- axis -->
<path d="M61 806H75" stroke="#e00000" stroke-width="1.500"/><path d="M75 806V785" stroke="#00c000" stroke-width="1.500"/>
<text x="57" y="806" style="font-size:9px;font-weight:bold;fill:#e00000">x</text><text x="72" y="790" style="font-size:9px;font-weight:bold;fill:#00d000">y</text><text x="72" y="805" style="font-size:9px;font-weight:bold;fill:#1030ff">z</text>

<!-- MOTORCYCLE -->
<g transform="translate(1000,500) scale(.33333)"><use href="#wheel"/></g>
<g transform="translate(1585,0) scale(-1,1) translate(1000,500) scale(.33333)"><use href="#wheel"/></g>
<g transform="translate(600,420) scale(.33333)">
<use href="#half"/>
<use href="#half" transform="translate(1155,0) scale(-1,1)"/>
<!-- plate -->
<path d="M245 640L400 520L577 585L755 520L915 640L865 668H290Z" fill="url(#plate)"/>
<path d="M250 650L290 668H865L905 650L905 690L880 696H275L250 690Z" fill="#0c0c0c"/>
<rect x="337" y="684" width="485" height="3" fill="#f0a080"/>
<!-- mechanism -->
<rect x="500" y="716" width="160" height="14" rx="6" fill="#1a1a1a"/>
<rect x="512" y="695" width="22" height="68" rx="6" fill="#1c1c1c"/><rect x="625" y="695" width="22" height="68" rx="6" fill="#1c1c1c"/>
<rect x="535" y="695" width="88" height="50" fill="#2a2a2a"/><rect x="552" y="705" width="50" height="28" fill="#4c4c4c"/>
<!-- seat -->
<path d="M345 -318L362 -325Q577 -345 793 -325L812 -318V135L742 205L725 250L660 448H498L432 250L415 205L345 135Z" fill="#b4b4b4"/>
<path d="M362 -326Q577 -346 793 -326V155L730 207L715 250L655 445H500L440 250L425 207L362 155Z" fill="#000"/>
<ellipse cx="577" cy="237" rx="130" ry="26" fill="url(#hl)"/>
<rect x="500" y="231" width="156" height="9" fill="#8c8c8c" opacity=".9"/>
<path d="M500 445L577 478L655 445Z" fill="#999"/>
<!-- bracket -->
<path d="M310 355L345 355L430 440L577 480L725 440L815 355L850 355L850 462L800 505L725 545L577 587L430 545L355 505L310 462Z" fill="url(#brk)"/>
<rect x="305" y="155" width="42" height="195" fill="#e04000"/>
<rect x="811" y="155" width="42" height="195" fill="#e04000"/>
<rect x="305" y="340" width="42" height="16" fill="#c03000"/><rect x="811" y="340" width="42" height="16" fill="#c03000"/>
<circle cx="322" cy="150" r="27" fill="#e04000"/><circle cx="322" cy="150" r="11" fill="#111"/>
<circle cx="835" cy="150" r="27" fill="#e04000"/><circle cx="835" cy="150" r="11" fill="#111"/>
</g>
<g transform="translate(630,210) scale(.33333)">
<rect x="390" y="276" width="190" height="12" fill="#222"/>
<path d="M315 175Q315 150 340 150H635Q655 150 655 175V190Q655 215 630 215H340Q315 215 315 190Z" fill="#1a1a1a"/>
<path d="M450 210Q450 183 485 183Q520 183 520 210V290H450Z" fill="#1c1c1c"/>
<path d="M450 200Q485 170 520 200" stroke="#888" stroke-width="4" fill="none"/>
<rect x="475" y="190" width="23" height="176" fill="#262626"/><rect x="482" y="190" width="6" height="176" fill="#3c3c3c"/>
<path d="M410 180L443 340M565 180L527 340" stroke="#999" stroke-width="2.500" fill="none"/>
<rect x="405" y="112" width="160" height="38" fill="url(#bar)"/>
<rect x="405" y="92" width="35" height="62" rx="8" fill="url(#bar)"/><rect x="532" y="92" width="35" height="62" rx="8" fill="url(#bar)"/>
<path d="M320 85L405 140M655 85L570 140" stroke="#2a2a2a" stroke-width="20"/>
<path d="M325 80L395 130M650 80L580 130" stroke="#666" stroke-width="3"/>
<g id="hb">
<rect x="52" y="55" width="133" height="40" rx="8" fill="url(#bar)"/>
<rect x="185" y="40" width="85" height="55" rx="10" fill="url(#bar)"/>
<path d="M278 28H365L355 80H280Z" fill="#2a2a2a"/><circle cx="297" cy="57" r="11" fill="#555"/>
<path d="M62 120Q150 110 210 108L320 80" stroke="#0c0c0c" stroke-width="10" fill="none"/>
<rect x="195" y="96" width="14" height="10" fill="#ccc"/><circle cx="252" cy="86" r="5" fill="#d03000"/>
<path d="M200 108L300 90" stroke="#111" stroke-width="14"/>
</g>
<use href="#hb" transform="translate(975,0) scale(-1,1)"/>
<rect x="318" y="150" width="63" height="22" fill="#1a1a1a"/><rect x="590" y="150" width="63" height="22" fill="#1a1a1a"/>
<ellipse cx="347" cy="148" rx="20" ry="6" fill="#d83800"/><ellipse cx="622" cy="148" rx="20" ry="6" fill="#d83800"/>
<rect x="330" y="157" width="36" height="7" fill="#bbb"/><rect x="600" y="157" width="36" height="7" fill="#bbb"/>
<path d="M318 178H381V368Q350 390 322 378Z" fill="url(#fork)"/>
<path d="M590 178H653V375Q620 390 589 365Z" fill="url(#fork)"/>
</g>

<!-- right panel -->
<rect x="1550" y="131" width="4" height="705" fill="#383838"/>
<path d="M1849 134L1852 139H1846Z" fill="#7ea63c"/><path d="M1848 139H1851V145H1848Z" fill="#ccc"/><path d="M1842 147L1847 143V147Z" fill="#3d7ad8"/><path d="M1856 147L1851 143V147Z" fill="#d84040"/>
<path d="M1864 146A7 7 0 1 1 1877 146L1873 146A3 3 0 1 0 1868 146Z" class="c"/><path d="M1871 144H1877L1874 148Z" fill="#777"/>
<path d="M1887 134V147H1898" stroke="#8a8a8a" fill="none"/><path d="M1889 145L1897 136M1897 134V139M1892 134H1897" class="cs"/>
<text class="m" y="166"><tspan x="1566">Channels</tspan><tspan x="1629">Edit</tspan><tspan x="1664">Object</tspan><tspan x="1713">Show</tspan></text>
<text x="1729" y="345" text-anchor="middle" style="font-size:10.500px;font-weight:bold;fill:#b8b8b8">Select objects in the scene to view, edit and set</text>
<text x="1729" y="358" text-anchor="middle" style="font-size:10.500px;font-weight:bold;fill:#b8b8b8">keyframes on channels (attributes)</text>
<rect x="1902" y="131" width="18" height="162" fill="#444"/><rect x="1902" y="293" width="18" height="300" fill="#3b3b3b"/>
<rect x="1902" y="292" width="18" height="2" fill="#555"/><rect x="1902" y="410" width="18" height="1" fill="#333"/><rect x="1902" y="525" width="18" height="1" fill="#333"/><rect x="1902" y="598" width="18" height="1" fill="#333"/>
<text transform="translate(1906,146) rotate(90)" style="font-size:11px;fill:#ccc">Channel Box / Layer Editor</text>
<text transform="translate(1906,308) rotate(90)" style="font-size:11px;fill:#777">Modeling Toolkit</text>
<text transform="translate(1906,425) rotate(90)" style="font-size:11px;fill:#777">Attribute Editor</text>
<text transform="translate(1906,536) rotate(90)" style="font-size:11px;fill:#777">Human IK</text>
<path d="M1672 525.500H1785" stroke="#777" stroke-dasharray="1 2"/>
<!-- layer editor -->
<rect x="1558" y="534" width="342" height="298" fill="#383838"/>
<rect x="1560" y="552" width="338" height="47" fill="#484848"/>
<path d="M1560 552V538Q1560 536 1562 536H1612L1615 552Z" fill="#484848"/>
<path d="M1626 552V538Q1626 536 1628 536H1679V552Z" fill="#3c3c3c"/>
<text x="1573" y="549" style="fill:#ddd;font-size:11.500px">Display</text><text x="1640" y="549" class="t" style="font-size:11.500px">Anim</text>
<text class="m" y="567"><tspan x="1569">Layers</tspan><tspan x="1615">Options</tspan><tspan x="1672">Help</tspan></text>
<g><path d="M1804 585L1809 582H1813V589H1809Z" class="w"/><path d="M1816 589V582M1813 585L1816 581L1820 585" stroke="#3fa6b6" stroke-width="2" fill="none"/>
<path d="M1827 585L1832 582H1836V589H1832Z" class="w"/><path d="M1838 581V588M1835 585L1838 589L1842 585" stroke="#3fa6b6" stroke-width="2" fill="none"/>
<path d="M1853 586L1860 581H1866V589L1860 589Z" class="w"/><path d="M1860 582H1868M1864 578V586" stroke="#3fa6b6" stroke-width="2"/>
<path d="M1877 585L1884 581H1890V587L1884 589Z" class="w"/><circle cx="1887" cy="581" r="3.500" class="c"/></g>
<rect x="1562" y="599" width="334" height="217" fill="#2b2b2b"/>
<g fill="#2f2f2f" stroke="#3c3c3c">
<rect x="1566.500" y="604" width="19" height="13" rx="2"/><rect x="1589.500" y="604" width="19" height="13" rx="2"/><rect x="1612.500" y="604" width="19" height="13" rx="2"/>
<rect x="1566.500" y="624" width="19" height="13" rx="2"/><rect x="1589.500" y="624" width="19" height="13" rx="2"/><rect x="1612.500" y="624" width="19" height="13" rx="2"/>
<rect x="1566.500" y="644" width="19" height="13" rx="2" fill="#3a3a3a"/><rect x="1589.500" y="644" width="19" height="13" rx="2" fill="#3a3a3a"/><rect x="1612.500" y="644" width="19" height="13" rx="2"/>
<rect x="1566.500" y="664" width="19" height="13" rx="2"/><rect x="1589.500" y="664" width="19" height="13" rx="2"/><rect x="1612.500" y="664" width="19" height="13" rx="2"/>
<rect x="1566.500" y="684" width="19" height="13" rx="2"/><rect x="1589.500" y="684" width="19" height="13" rx="2"/><rect x="1612.500" y="684" width="19" height="13" rx="2"/>
</g>
<g><text x="1595" y="615" style="fill:#444">P</text><text x="1595" y="635" style="fill:#444">P</text><text x="1595" y="695" style="fill:#444">P</text><text x="1595" y="675" style="fill:#444">P</text><text x="1572" y="655" style="fill:#eee">V</text><text x="1595" y="655" style="fill:#eee">P</text></g>
<path d="M1636 617L1650 604V617M1636 637L1650 624V637M1636 657L1650 644V657M1636 677L1650 664V677M1636 697L1650 684V697" fill="none" stroke="#aaa"/>
<path d="M1635 604V617M1635 624V637M1635 644V657M1635 664V677M1635 684V697" stroke="#555"/>
<text class="l" x="1654" y="615">layer3</text><text class="l" x="1654" y="635">curves</text><text class="l" x="1654" y="655">layer2</text><text class="l" x="1654" y="675">layer1</text><text class="l" x="1654" y="695">REF</text>
<rect x="1562" y="816" width="334" height="12" fill="#3a3a3a"/><rect x="1575" y="817" width="292" height="10" rx="4" fill="#5c5c5c"/>
<path d="M1570 818V827L1564 822.500ZM1888 818V827L1894 822.500Z" class="w"/>

<!-- timeline -->
<path d="M3 840V915" stroke="#777" stroke-dasharray="1 2"/>
<rect x="13" y="842" width="1613" height="73" fill="#2b2b2b"/>
<rect x="22" y="842" width="11" height="73" fill="#555"/>
<path d="M73.500 856V911M140.500 856V911M206.500 856V911M273.500 856V911M339.500 856V911M406.500 856V911M472.500 856V911M539.500 856V911M605.500 856V911M672.500 856V911M738.500 856V911M805.500 856V911M871.500 856V911M938.500 856V911M1005.500 856V911M1071.500 856V911M1138.500 856V911M1204.500 856V911M1271.500 856V911M1337.500 856V911M1404.500 856V911M1470.500 856V911M1537.500 856V911M1603.500 856V911" stroke="#777"/>
<rect x="21" y="912" width="1596" height="3" fill="#c6ba78"/>
<text class="k" y="852"><tspan x="76">5</tspan><tspan x="143">10</tspan><tspan x="209">15</tspan><tspan x="276">20</tspan><tspan x="342">25</tspan><tspan x="409">30</tspan><tspan x="475">35</tspan><tspan x="542">40</tspan><tspan x="608">45</tspan><tspan x="675">50</tspan><tspan x="741">55</tspan><tspan x="808">60</tspan><tspan x="874">65</tspan><tspan x="941">70</tspan><tspan x="1007">75</tspan><tspan x="1074">80</tspan><tspan x="1140">85</tspan><tspan x="1207">90</tspan><tspan x="1273">95</tspan><tspan x="1340">100</tspan><tspan x="1406">105</tspan><tspan x="1473">110</tspan><tspan x="1539">115</tspan><tspan x="1606">120</tspan></text>
<text x="23" y="907" style="fill:#eee;font-size:11px">1</text>
<rect x="1632" y="848" width="87" height="18" rx="2" fill="#2b2b2b"/><text x="1637" y="861" class="m">1</text>
<g class="w"><rect x="1731" y="850" width="2" height="12"/><path d="M1741 850V862L1735 856ZM1747 850V862L1741 856Z"/><rect x="1754" y="850" width="2" height="12"/><path d="M1767 850V862L1758 856Z"/>
<path d="M1793 850V862L1786 856Z"/><path d="M1815 848V864L1804 856Z"/><path d="M1825 848V864L1836 856Z"/><path d="M1847 850V862L1854 856Z"/><rect x="1871" y="850" width="2" height="12" /><path d="M1877 850V862L1884 856Z"/><rect x="1885" y="850" width="2" height="12"/><path d="M1892 850V862L1898 856ZM1898 850V862L1904 856Z"/><rect x="1905" y="850" width="2" height="12"/></g>
<rect x="1777" y="849" width="2" height="14" fill="#e07030"/><rect x="1857" y="849" width="2" height="14" fill="#e07030"/>

<!-- range row -->
<path d="M3 925V952" stroke="#777" stroke-dasharray="1 2"/>
<rect x="14" y="926" width="88" height="25" rx="2" fill="#2b2b2b"/><text x="20" y="942" class="m">1</text>
<rect x="110" y="926" width="88" height="25" rx="2" fill="#2b2b2b"/><text x="115" y="942" class="m">1</text>
<rect x="205" y="923" width="919" height="30" fill="#404040"/>
<rect x="210" y="928" width="557" height="20" rx="3" fill="#606060"/>
<rect x="215" y="931" width="14" height="14" rx="3" fill="#999"/><rect x="749" y="931" width="14" height="14" rx="3" fill="#999"/>
<text x="232" y="942" class="m">1</text><text x="727" y="942" class="m">120</text>
<rect x="1132" y="926" width="88" height="25" rx="2" fill="#2b2b2b"/><text x="1137" y="942" class="m">120</text>
<rect x="1228" y="926" width="88" height="25" rx="2" fill="#2b2b2b"/><text x="1233" y="942" class="m">200</text>
<path class="sep" d="M1321 928V948M1365 928V948M1638 928V948M1820 928V948"/>
<path d="M1339 929H1349V949L1344 943L1339 949Z" fill="#e07030"/><path d="M1347 933H1355M1351 929V937" stroke="#ddd" stroke-width="1.500"/>
<path d="M1381 935H1391L1386 941Z" fill="none" stroke="#888"/><path d="M1509 935H1519L1514 941Z" fill="none" stroke="#888"/>
<rect x="1398" y="927" width="100" height="23" rx="2" fill="#3e3e3e" stroke="#4e4e4e"/><text x="1403" y="943" class="m">No Character Set</text>
<rect x="1527" y="927" width="100" height="23" rx="2" fill="#3e3e3e" stroke="#4e4e4e"/><text x="1532" y="943" class="m">No Anim Layer</text>
<rect x="1652" y="928" width="95" height="19" rx="1" fill="#5c5c5c"/><rect x="1728" y="928" width="19" height="19" fill="#505050"/><path d="M1733 935H1743L1738 941Z" class="w"/><text x="1655" y="942" class="m">24 fps</text>
<path d="M1762 934Q1763 930 1768 930H1776M1773 927L1777 930L1773 933M1776 940Q1775 944 1770 944H1762M1765 941L1761 944L1765 947" stroke="#ccc" stroke-width="2" fill="none"/>
<rect x="1787" y="927" width="23" height="23" fill="#5089b0"/><rect x="1791" y="932" width="15" height="14" fill="#333"/><circle cx="1798" cy="939" r="6" fill="#e8df2c"/><text x="1796" y="943" style="font-size:10px;font-weight:bold;fill:#222">!</text><path d="M1800 927H1807L1810 931V934H1803Z" class="w"/>
<path d="M1834 935H1838L1843 931V946L1838 942H1834Z" class="w"/><path d="M1846 934Q1849 939 1846 943" class="st"/>
<circle cx="1871" cy="939" r="8" class="st"/><path d="M1865 939H1877M1871 933V945" stroke="#e07030" stroke-width="1.500"/>
<circle cx="1892" cy="933" r="3" class="st"/><circle cx="1904" cy="931" r="2.500" fill="#e07030"/><path d="M1903 934L1900 941L1895 947M1900 941L1906 947M1896 937L1908 939" stroke="#e07030" stroke-width="2" fill="none"/>

<!-- command -->
<path d="M3 960V988M980 960V988M983 960V988" stroke="#777" stroke-dasharray="1 2"/>
<circle cx="22" cy="974" r="8" fill="#84b638"/><text x="18.500" y="978" style="font-size:11px;font-weight:bold;fill:#2c3a12">?</text>
<text x="38" y="978" style="font-size:10px;fill:#ddd">Move Tool: Select an object to move.</text>
<text x="1002" y="978" style="fill:#ddd;font-size:11px">MEL</text>
<rect x="1036" y="963" width="343" height="22" rx="2" fill="#2e2e2e"/>
<rect x="1387" y="964" width="500" height="21" fill="#2a2a2a"/>
<rect x="1893" y="965" width="18" height="3" class="w"/><rect x="1893" y="969" width="18" height="17" fill="#ccc"/><text x="1896" y="981" style="font-size:10px;font-weight:bold;fill:#333">{;}</text>
</svg>
</body></html>
